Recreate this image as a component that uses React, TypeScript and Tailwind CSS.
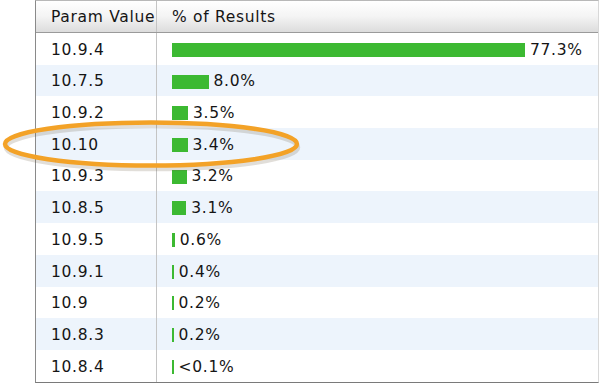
const rows: { value: string; pct: number; label: string }[] = [
  { value: "10.9.4", pct: 77.3, label: "77.3%" },
  { value: "10.7.5", pct: 8.0, label: "8.0%" },
  { value: "10.9.2", pct: 3.5, label: "3.5%" },
  { value: "10.10", pct: 3.4, label: "3.4%" },
  { value: "10.9.3", pct: 3.2, label: "3.2%" },
  { value: "10.8.5", pct: 3.1, label: "3.1%" },
  { value: "10.9.5", pct: 0.6, label: "0.6%" },
  { value: "10.9.1", pct: 0.4, label: "0.4%" },
  { value: "10.9", pct: 0.2, label: "0.2%" },
  { value: "10.8.3", pct: 0.2, label: "0.2%" },
  { value: "10.8.4", pct: 0.05, label: "<0.1%" },
];

const BAR_SCALE = 353 / 77.3;

export default function App() {
  return (
    <div className="relative w-[600px] h-[383px] bg-white font-['DejaVu_Sans',Verdana,sans-serif] text-[15.5px] tracking-[0.7px] text-[#151515]">
      <div className="ml-[35px] w-[564px] border-l border-b border-r border-t border-l-[#8a8a8a] border-b-[#7a7a7a] border-r-[#d8d8d8] border-t-[#b8b8b8]">
        {/* header */}
        <div className="flex h-[32px] border-b border-[#9a9a9a] bg-gradient-to-b from-white via-[#f4f4f4] to-[#dcdcdc]">
          <div className="w-[121px] shrink-0 pl-[15px] pt-[3px] flex items-center border-r border-[#c4c4c4] whitespace-nowrap">
            Param Value
          </div>
          <div className="flex-1 pl-[15px] pt-[3px] flex items-center">% of Results</div>
        </div>
        {rows.map((r, i) => (
          <div
            key={r.value + i}
            className={`flex h-[31.7px] ${i % 2 === 1 ? "bg-[#edf4fc]" : "bg-white"}`}
          >
            <div className="w-[121px] shrink-0 pl-[15px] pt-[3px] flex items-center border-r border-[#c4c4c4]">
              {r.value}
            </div>
            <div className="flex-1 pl-[15px] pt-[2px] flex items-center gap-[5px]">
              <div
                className="h-[14px] bg-[#3cb932]"
                style={{ width: Math.max(1.5, Math.round(r.pct * BAR_SCALE * 10) / 10) }}
              />
              <span className="pt-[1px]">{r.label}</span>
            </div>
          </div>
        ))}
      </div>
      {/* highlight ring */}
      <svg
        className="absolute left-0 top-0 pointer-events-none"
        width="600"
        height="383"
        viewBox="0 0 600 383"
      >
        <ellipse cx="151" cy="145.5" rx="146" ry="21.5" fill="none" stroke="#6a5a40" strokeOpacity="0.2" strokeWidth="4.5" transform="translate(1 2)" />
        <ellipse cx="151" cy="144" rx="146" ry="21.5" fill="none" stroke="#f3a227" strokeWidth="4.5" />
      </svg>
    </div>
  );
}
